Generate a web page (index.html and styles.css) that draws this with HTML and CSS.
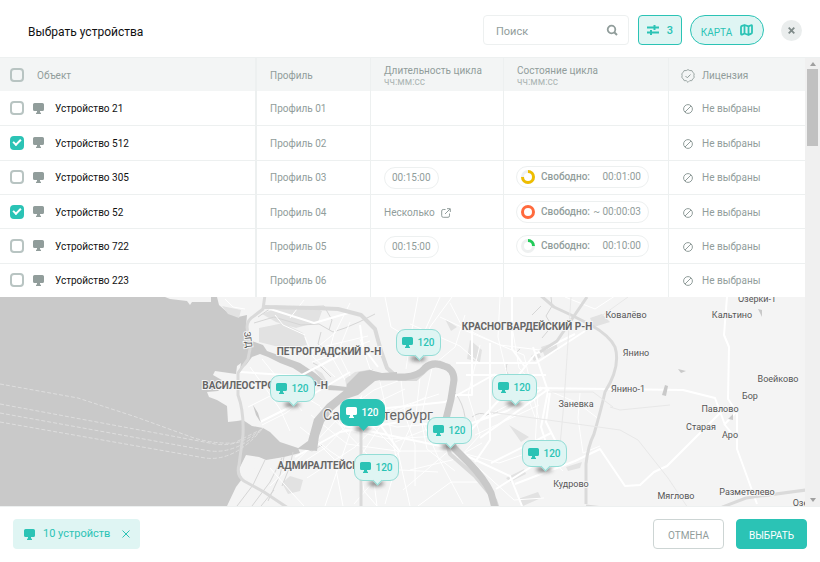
FILE: index.html
```
<!DOCTYPE html>
<html lang="ru">
<head>
  <meta charset="UTF-8" />
  <meta name="viewport" content="width=device-width, initial-scale=1.0"/>
  <title>Выбрать устройства</title>
  <link rel="stylesheet" href="styles.css">
</head>
<body>
<svg class="sprite" aria-hidden="true">
  <symbol id="monitor" viewBox="0 0 11 11"><path d="M1.6 0h7.8Q11 0 11 1.6v4.8Q11 8 9.4 8H7v1.3l1 .6V11H3V9.900l1-.6V8H1.600Q0 8 0 6.400V1.600Q0 0 1.600 0z" fill="currentColor"/></symbol>
  <symbol id="none" viewBox="0 0 10 10"><path d="M5 .6a4.400 4.400 0 1 0 0 8.800a4.400 4.400 0 1 0 0-8.800zM2 8l6-6" fill="none" stroke="currentColor"/></symbol>
</svg>
<div class="dialog">
  <header class="header">
    <h1>Выбрать устройства</h1>
    <label class="search">
      <input type="text" placeholder="Поиск" aria-label="Поиск">
      <svg width="12" height="12" viewBox="0 0 12 12"><circle cx="5.500" cy="5.500" r="3.800" fill="none" stroke="currentColor" stroke-width="1.800"/><path d="M8 8L11 11" stroke="currentColor" stroke-width="2"/></svg>
    </label>
    <button class="tool filter" type="button">
      <svg width="12" height="12" viewBox="0 0 12 12"><path d="M0 3.500h12M0 8.500h12" stroke="currentColor" stroke-width="2"/><path d="M7.500 1v5M4 6v5" stroke="currentColor" stroke-width="2"/></svg>
      <span>3</span>
    </button>
    <button class="tool map-toggle" type="button">
      <span>КАРТА</span>
      <svg width="13" height="12" viewBox="0 0 13 12"><path d="M1 3.200Q1 2.200 2 1.800L4.500 1l4 1.400L11 1.300q1-.3 1 .7v6.500q0 .8-.8 1.100L8.500 11l-4-1.500L2 10.600q-1 .3-1-.8zM4.500 1v8.500M8.500 2.400V11" fill="none" stroke="currentColor" stroke-width="1.800" stroke-linejoin="round"/></svg>
    </button>
    <button class="close" type="button" aria-label="Закрыть">
      <svg width="7" height="7" viewBox="0 0 7 7"><path d="M.7.7l5.600 5.600M6.300.7L.7 6.300" stroke="currentColor" stroke-width="1.800"/></svg>
    </button>
  </header>

  <main class="body">
    <div class="content">
      <table class="devices">
        <colgroup>
          <col><col class="c-profile"><col class="c-time"><col class="c-state"><col class="c-license">
        </colgroup>
        <thead>
          <tr>
            <th><label class="cell head-object"><input type="checkbox" class="check"><span>Объект</span></label></th>
            <th>Профиль</th>
            <th class="two-line">Длительность цикла<small>чч:мм:сс</small></th>
            <th class="two-line">Состояние цикла<small>чч:мм:сс</small></th>
            <th><div class="cell license">
              <svg width="14" height="14" viewBox="0 0 14 14" fill="none" stroke="currentColor"><path d="M7 .6l1.800 1 2-.1.900 1.800 1.500 1.300-.3 2 .3 2-1.500 1.300-.9 1.800-2-.1L7 13.400l-1.800-1.800-2 .1-.9-1.800L.8 8.600l.3-2-.3-2 1.500-1.300.9-1.800 2 .1z" stroke-width=".9" stroke-linejoin="round"/><path d="M4.500 7l1.800 1.800 3.200-3.300"/></svg>
              <span>Лицензия</span></div></th>
          </tr>
        </thead>
        <tbody>
          <tr>
            <td><label class="cell"><input type="checkbox" class="check"><svg class="monitor"><use href="#monitor"/></svg><span>Устройство 21</span></label></td>
            <td>Профиль 01</td>
            <td></td>
            <td></td>
            <td><div class="cell license"><svg class="none"><use href="#none"/></svg><span>Не выбраны</span></div></td>
          </tr>
          <tr>
            <td><label class="cell"><input type="checkbox" class="check" checked><svg class="monitor"><use href="#monitor"/></svg><span>Устройство 512</span></label></td>
            <td>Профиль 02</td>
            <td></td>
            <td></td>
            <td><div class="cell license"><svg class="none"><use href="#none"/></svg><span>Не выбраны</span></div></td>
          </tr>
          <tr>
            <td><label class="cell"><input type="checkbox" class="check"><svg class="monitor"><use href="#monitor"/></svg><span>Устройство 305</span></label></td>
            <td>Профиль 03</td>
            <td><span class="pill">00:15:00</span></td>
            <td class="state-cell"><div class="pill state">
              <svg class="ring" viewBox="0 0 14 14"><circle cx="7" cy="7" r="5.500"/><path class="yellow" d="M7 1.500A5.500 5.500 0 1 1 1.500 7"/></svg>
              <b>Свободно:</b><span>00:01:00</span></div></td>
            <td><div class="cell license"><svg class="none"><use href="#none"/></svg><span>Не выбраны</span></div></td>
          </tr>
          <tr>
            <td><label class="cell"><input type="checkbox" class="check" checked><svg class="monitor"><use href="#monitor"/></svg><span>Устройство 52</span></label></td>
            <td>Профиль 04</td>
            <td><a class="several" href="#">Несколько
              <svg width="10" height="10" viewBox="0 0 10 10" fill="none" stroke="currentColor"><path d="M4.500 1.500H2.200Q.7 1.500.7 3v4.800q0 1.500 1.500 1.500H7q1.500 0 1.500-1.500V5.500M6 .7h3.300V4M9 1L4 6"/></svg></a></td>
            <td class="state-cell"><div class="pill state">
              <svg class="ring" viewBox="0 0 14 14"><circle class="red" cx="7" cy="7" r="5.500"/></svg>
              <b>Свободно:</b><span>~ 00:00:03</span></div></td>
            <td><div class="cell license"><svg class="none"><use href="#none"/></svg><span>Не выбраны</span></div></td>
          </tr>
          <tr>
            <td><label class="cell"><input type="checkbox" class="check"><svg class="monitor"><use href="#monitor"/></svg><span>Устройство 722</span></label></td>
            <td>Профиль 05</td>
            <td><span class="pill">00:15:00</span></td>
            <td class="state-cell"><div class="pill state">
              <svg class="ring" viewBox="0 0 14 14"><circle cx="7" cy="7" r="5.500"/><path class="green" d="M7 1.500A5.500 5.500 0 0 1 12.500 7"/></svg>
              <b>Свободно:</b><span>00:10:00</span></div></td>
            <td><div class="cell license"><svg class="none"><use href="#none"/></svg><span>Не выбраны</span></div></td>
          </tr>
          <tr>
            <td><label class="cell"><input type="checkbox" class="check"><svg class="monitor"><use href="#monitor"/></svg><span>Устройство 223</span></label></td>
            <td>Профиль 06</td>
            <td></td>
            <td></td>
            <td><div class="cell license"><svg class="none"><use href="#none"/></svg><span>Не выбраны</span></div></td>
          </tr>
        </tbody>
      </table>

      <div class="map">
        <svg class="map-art" viewBox="0 0 805 209" preserveAspectRatio="xMinYMin slice">
          <!-- gulf -->
          <path class="water" d="M0 0H217L219 8 226 14 238 20 247 18 246 30 249 43 263 48 267 54 278 58 300 66 315 76 329 88 347 90V94L327 93 310 82 293 71 280 66 268 60 260 57 252 60 246 68 240 73 241 66 237 69 236 77 215 74 213 78 227 86 218 94 207 95 209 100 217 103 227 109 228 125 237 124 243 123 252 129 263 131 270 135 280 145 298 151 300 156 284 160 266 163 259 160 246 158 239 172 242 182 236 190 227 209H0z"/>
          <path class="land" d="M165 0H211V5H192L190 8 187 4 170 2zM246 161l11 6-8 17-9-6z"/>
          <path class="park" d="M222 9l19 4-2 8-11-4zM259 31l15-3 9-2 20 10 4 12-20 4-28-7zM262 17l20-8 28 0 12 5-4 11-22 6-20-6zM345 82l10-7 18-3 3 8-22 12-7 0zM312 70l10 6 6 10-8-6zM282 186l8-7 13 4-3 11-12 3zM470 43l12 10-2 12-13-3zM509 128l20 12-8 5zM506 181l18-9 2 5-16 8zM518 202l20-7 3 6-18 8zM590 21l12-4 8 8-16 5zM566 170l16-5-2 6-12 3zM445 22l12 8-6 4zM531 59l7-5 3 6-7 4zM541 50l15-5 2 8-13 7z"/>
          <g class="canal">
            <path d="M237 209l16-21 12-25M252 209l18-24 12-24M261 209l13-16M284 160l-4 18-12 26M302 150l10 4 10-6M293 155l-3 14-8 20"/>
            <path d="M254 26l20-6 27 8 18-1 14 8 12-4 14-6 16-8M321 35l-3 12 9 7 10 0M258 20l16-11 26 1 24-1M324 9l8 14-3 10M313 66l8 4 10 10"/>
            <path d="M551 0l1 9-6 10 6 10-10 12M541 9l-9 9M508 65q-4 7 0 12M520 52q-6 4-2 9M472 120q8-6 14-2l12-3M455 96q8 10 10 24"/>
          </g>
          <g class="street thin">
            <path d="M225 2l8 8 12 2M275 18l8 10 22 10M250 70l16 22 14 20 10 22M262 62l18 22 22 30M242 92l22-5 26 4 30 18M248 110l28-14 30-18M262 128l24-12 26-20M305 40l8 20 22 20M335 33l-6 22 16 28M350 25l-12 30 12 24M312 65l26-9 32-12M318 51l50-12M360 42l10 30 10 5M350 6l-15 30-30 24M385 0l6 30 22 13M418 0l-6 32-6 40M440 0l-18 40-9 24M452 0l-22 30-10 36M465 18l-10 32-30 25M290 21l14-18M270 189l40-38 34-36 30-22 24-9M297 169l28-18 36-38 44-21M307 181l48-31 36-37 48-16M325 209l22-64 15-47M343 209l-9-47-26-26M377 209l-6-48-29-30-9-18M410 209l-12-54-26-26-8-24M300 130l30 24 15 10 37 8 56 3M311 118l36 29 50 7 50 0M320 110l24 22 46 10 48-3M335 102l22 18 40 10 48-4M380 85l8 35 9 45-12 42M401 83l4 35 10 30 0 41M420 80l-4 38-17 37-45 52M432 71l-11 50 17 39 25 47M395 145l50-20M360 160l26-40 40-20M403 193l48-41M418 209l33-24 35 0M410 173l42-10 30-17M455 174l-28-22-6-30M270 171l22 25 12 13M360 170l4 24 13 15"/>
            <path d="M440 20l60 28 40 5M480 48l-12 50 12 40-20 22M410 27l50 22 20 18M450 6l14 27 60 25 15 65M475 138l64-30M459 155l40 11 60-21M472 165l42 38 30-2M480 123l47-25 8 22M511 23l8 48 21 22M500 0l-2 40 10 42M565 0l30 12 26-17M540 90l38 16 22 17M538 97l-3 52 28 25M580 96l-2 25 5 35 17-7"/>
          </g>
          <g class="street">
            <path d="M264 10l50 16 38-11M240 75l60 4 38-20M260 125l40-20 50-30M378 70l-15-20-3-22M295 160l45-25 60-10M360 100l40 55M350 115l95-10 50-28M420 127l52-1 35-12 35-22M340 128l110 23 60 28 12 30M455 150l45-48 35-45 40-20M456 66h80L585 34M466 78h80M472 23v75h-24M490 46v97l-15 22M512 0v52l13 18M533 50l15 44-7 36 9 28-54 34M533 91l150 2 32 8 10 27 8 10M550 95l-4 30 18 36M491 166l60-30M515 187l60-23 25-12 25 37 15-1 14-13 13-6 60-60M724 128l13-14V152l20 55M727 0l-3 38 5 12-1 52 8 12M480 141l70-50"/>
          </g>
          <path class="embankment" d="M264 10l50 1 24 1 23 6 14 14 6 22 6 17 12 11 17 0 12-11 10-4 11 2 4 11-3 24-7 28 7 25 25 22 20 24 4 12"/>
          <path class="water" d="M347 87l12-12 11-2 12 3 15-1v5l-22 4-17 14-12 4-13 11-9 12-5 14-2 15-20-2 11-8 6-22 13-15 19-15z"/>
          <path class="neva" d="M380 80q10 0 25 0 14-1 20-9 8-7 19-2 10 3 10 14l-3 19-6 24q2 12 9 25l14 14q16 16 23 31l4 15"/>
          <g class="highway">
            <path d="M265-2l-2 14-9 7q-7 4-7 11l3 22-2 10-10 14v22q6 16 5 40l-4 30q-3 10 5 16l20 11 24 16M361 104v105M540-2l14 12 15 7 22 11q19 11 24 22 6 19-10 45-4 18-11 42-6 12-8 30v40M586 209l26 3M720 211l26-10 60-8M540 55l17-11 30-44"/>
          </g>
          <path class="minor" d="M610 110l10 3 50-5M490 115l130 18 18 10 30 38 20 30M571 0l-7 105-6 65M600 20l28-20M613 110l-20-15-45 0"/>
          <path class="mark" d="M665 88l3 1-2 10-4-1zM758 12l4 1v7zM728 122l5-5v6zM253 108l5 8 3 10-5-8zM722 44l4 4M678 72l3 4 5-2"/>
          <g class="ferry"><path d="M0 87l78 14 58 19 58 21q20 6 40 5l30-15M0 107l215 40q24 4 48-16M0 116l210 38q28 3 53-23M0 125l205 36q30 4 58-30"/></g>
          <g class="town">
            <text x="626" y="21">Ковалёво</text><text x="636" y="59">Янино</text><text x="628" y="95">Янино-1</text>
            <text x="576" y="110">Заневка</text><text x="571" y="190">Кудрово</text><text x="757" y="5">Озерки-1</text>
            <text x="732" y="21">Кальтино</text><text x="778" y="85">Воейково</text><text x="750" y="102">Бор</text>
            <text x="720" y="115">Павлово</text><text x="701" y="133">Старая</text><text x="730" y="141">Аро</text>
            <text x="676" y="202">Мяглово</text><text x="747" y="198">Разметелево</text><text x="808" y="209">Озерки</text>
            <text x="0" y="0" transform="translate(245 43) rotate(83)">ЗГД</text>
          </g>
          <g class="district">
            <text x="527" y="33">КРАСНОГВАРДЕЙСКИЙ Р-Н</text><text x="329" y="58">ПЕТРОГРАДСКИЙ Р-Н</text>
            <text x="265" y="92">ВАСИЛЕОСТРОВСКИЙ Р-Н</text><text x="335" y="172">АДМИРАЛТЕЙСКИЙ Р-Н</text>
          </g>
          <text class="city" x="378" y="123">Санкт-Петербург</text>
        </svg>
        <button class="pin p1" type="button"><svg class="monitor"><use href="#monitor"/></svg>120</button>
        <button class="pin p2" type="button"><svg class="monitor"><use href="#monitor"/></svg>120</button>
        <button class="pin p3 active" type="button"><svg class="monitor"><use href="#monitor"/></svg>120</button>
        <button class="pin p4" type="button"><svg class="monitor"><use href="#monitor"/></svg>120</button>
        <button class="pin p5" type="button"><svg class="monitor"><use href="#monitor"/></svg>120</button>
        <button class="pin p6" type="button"><svg class="monitor"><use href="#monitor"/></svg>120</button>
        <button class="pin p7" type="button"><svg class="monitor"><use href="#monitor"/></svg>120</button>
      </div>
    </div>
    <div class="scrollbar" aria-hidden="true">
      <i class="arrow up"></i>
      <i class="thumb"></i>
      <i class="arrow down"></i>
    </div>
  </main>

  <footer class="footer">
    <div class="chip">
      <svg class="monitor"><use href="#monitor"/></svg>
      <span>10 устройств</span>
      <button type="button" aria-label="Сбросить"><svg width="8" height="8" viewBox="0 0 8 8"><path d="M.5.5l7 7M7.500.5l-7 7" stroke="currentColor"/></svg></button>
    </div>
    <button class="btn" type="button">ОТМЕНА</button>
    <button class="btn primary" type="button">ВЫБРАТЬ</button>
  </footer>
</div>
</body>
</html>
```
FILE: styles.css
```
:root {
  --accent: #2bc3b5;
  --accent-light: #dff5f3;
  --gray: #919d9b;
  --line: #edf0f0;
  --head: #f3f5f5;
}

* {
  box-sizing: border-box;
}

body {
  margin: 0;
  font-family: Roboto, sans-serif;
  font-size: 11px;
  line-height: 14px;
  color: var(--gray);
  background: #fff;
}

button, input {
  font-family: inherit;
  font-size: inherit;
  color: inherit;
}

button {
  cursor: pointer;
}

svg {
  display: block;
  flex: none;
}

.sprite {
  position: absolute;
  width: 0;
  height: 0;
}

.dialog {
  display: flex;
  flex-direction: column;
  min-height: 100vh;
}

/* header */
.header {
  display: flex;
  align-items: center;
  padding: 15px 18px 12px 28px;
  border-bottom: 1px solid var(--line);
}

.header h1 {
  flex: 1;
  margin: 0;
  padding-top: 3px;
  font-size: 12px;
  font-weight: 400;
  color: #111;
}

.search {
  display: flex;
  align-items: center;
  width: 146px;
  height: 30px;
  padding: 0 10px 0 12px;
  border: 1px solid var(--line);
  border-radius: 4px;
}

.search input {
  flex: 1;
  min-width: 0;
  padding: 2px 0 0;
  border: none;
  outline: none;
  background: none;
}

.search input::placeholder {
  color: var(--gray);
}

.tool {
  display: flex;
  align-items: center;
  justify-content: center;
  gap: 8px;
  height: 30px;
  padding: 0;
  color: var(--accent);
  background: var(--accent-light);
  border: 1px solid var(--accent);
}

.filter {
  width: 44px;
  margin-left: 9px;
  border-radius: 4px;
  font-weight: 500;
}

.filter span {
  padding-top: 1px;
}

.map-toggle {
  width: 74px;
  margin-left: 8px;
  border-radius: 15px;
  font-size: 10px;
}

.map-toggle span {
  padding-top: 4px;
}

.close {
  display: flex;
  align-items: center;
  justify-content: center;
  width: 21px;
  height: 21px;
  margin-left: 17px;
  padding: 0;
  border: none;
  border-radius: 50%;
  color: #7f8a89;
  background: #eaeded;
}

.body {
  flex: 1;
  display: flex;
}

.content {
  flex: 1;
  min-width: 0;
  display: flex;
  flex-direction: column;
}

/* table */
.devices {
  width: 100%;
  height: 239px;
  table-layout: fixed;
  border-spacing: 0;
  font-size: 10px;
}

.c-profile { width: 114px; }
.c-time { width: 133px; }
.c-state { width: 165px; }
.c-license { width: 136px; }

th, td {
  height: 34px;
  padding: 2px 0 0 13px;
  font-weight: 400;
  text-align: left;
  vertical-align: middle;
  white-space: nowrap;
  border-right: 1px solid var(--line);
}

th:first-child, td:first-child {
  padding: 0 0 0 10px;
  border-right-width: 2px;
}

th:last-child, td:last-child {
  padding-left: 12px;
  border-right: none;
}

th {
  height: 33px;
  background: var(--head);
}

tbody tr + tr td {
  border-top: 1px solid var(--line);
}

th small {
  display: block;
  font-size: 10px;
  line-height: 10px;
  color: #aeb7b6;
}

.two-line {
  line-height: 13px;
}

.cell {
  display: flex;
  align-items: center;
}

.check {
  appearance: none;
  display: grid;
  place-items: center;
  width: 14px;
  height: 14px;
  margin: 0 9px 0 0;
  border: 2px solid #b8c4c2;
  border-radius: 4px;
  background: #fff;
}

.check:checked {
  border-color: var(--accent);
  background: var(--accent);
}

.check:checked::after {
  content: "";
  width: 6px;
  height: 3px;
  margin-bottom: 2px;
  border: solid #fff;
  border-width: 0 0 2px 2px;
  transform: rotate(-45deg);
}

.head-object .check {
  margin-right: 13px;
  background: none;
}

.head-object span {
  padding-top: 2px;
}

.monitor {
  width: 11px;
  height: 11px;
}

td .cell .monitor {
  margin-right: 11px;
}

td label span {
  padding-top: 2px;
  color: #111;
}

.license svg {
  margin-right: 7px;
}

.license .none {
  width: 10px;
  height: 10px;
  margin: 0 9px 0 2px;
}

.pill {
  display: inline-block;
  padding: 3px 7px;
  border: 1px solid var(--line);
  border-radius: 11px;
}

td .pill, .state span {
  font-size: 10px;
}

td.state-cell {
  padding: 0 0 0 12px;
}

.state {
  display: flex;
  align-items: center;
  width: 133px;
  height: 22px;
  padding: 0 7px 0 4px;
}

.state b {
  margin-left: 6px;
  font-weight: 500;
}

.state span {
  flex: 1;
  text-align: right;
}

.ring {
  width: 14px;
  height: 14px;
  fill: none;
  stroke: #eef0f0;
  stroke-width: 3;
}

.ring .yellow { stroke: #eebd00; }
.ring .red { stroke: #ff6a3d; }
.ring .green { stroke: #22cb59; }

.several {
  display: flex;
  align-items: center;
  gap: 6px;
  color: inherit;
  text-decoration: none;
}

/* map */
.map {
  position: relative;
  flex: 1;
  min-height: 209px;
  overflow: hidden;
  isolation: isolate;
  background: #f4f4f4;
}

.map-art {
  position: absolute;
  z-index: -2;
  width: 100%;
  height: 100%;
}

.water { fill: #c9c9c9; }
.land { fill: #f4f4f4; }
.park { fill: #e2e2e2; }
.mark { fill: #c9c9c9; }

.canal, .street, .embankment, .neva, .highway, .minor, .ferry {
  fill: none;
  stroke-linejoin: round;
}

.canal { stroke: #d6d6d6; stroke-width: 1; }
.street { stroke: #fff; stroke-width: 2; }
.street.thin { stroke-width: 1; }
.embankment { stroke: #d9d9d9; stroke-width: 4; }
.neva { stroke: #c9c9c9; stroke-width: 7; }
.highway { stroke: #dadada; stroke-width: 3; }
.minor { stroke: #e8e8e8; }
.ferry { stroke: #dedede; stroke-dasharray: 4 2; }

.map-art text {
  text-anchor: middle;
  fill: #666;
  stroke: #f6f6f6;
  stroke-width: 2px;
  paint-order: stroke;
}

.map-art .town text { font-size: 9px; fill: #555; }
.district { font-size: 10px; font-weight: 700; }
.map-art .city { font-size: 14px; }

.pin {
  position: absolute;
  display: flex;
  align-items: center;
  justify-content: center;
  gap: 4px;
  width: 45px;
  height: 27px;
  padding: 0;
  font-size: 10px;
  font-weight: 500;
  color: var(--accent);
  background: var(--accent-light);
  border: 1px solid #93ddd6;
  border-radius: 9px;
}

.pin::before {
  content: "";
  position: absolute;
  bottom: -6px;
  left: 13px;
  width: 16px;
  height: 5px;
  border-radius: 50%;
  background: #777;
  filter: blur(2px);
  z-index: -1;
}

.pin::after {
  content: "";
  position: absolute;
  bottom: -4px;
  left: 19px;
  width: 6px;
  height: 6px;
  background: inherit;
  border: solid #93ddd6;
  border-width: 0 1px 1px 0;
  transform: rotate(45deg);
}

.pin.active {
  color: #fff;
  background: var(--accent);
  border-color: var(--accent);
}

.pin.active::after {
  border-color: var(--accent);
}

.p1 { left: 396px; top: 32px; }
.p2 { left: 270px; top: 78px; }
.p3 { left: 340px; top: 102px; }
.p4 { left: 427px; top: 120px; }
.p5 { left: 354px; top: 157px; }
.p6 { left: 492px; top: 77px; }
.p7 { left: 522px; top: 143px; }

/* scrollbar */
.scrollbar {
  display: flex;
  flex-direction: column;
  align-items: center;
  width: 15px;
  padding: 4px 0;
  background: #f0f0f0;
}

.arrow {
  border: 3px solid transparent;
}

.arrow.up {
  border-top: none;
  border-bottom: 4px solid #a0a0a0;
}

.arrow.down {
  margin-top: auto;
  border-bottom: none;
  border-top: 4px solid #a0a0a0;
}

.thumb {
  width: 11px;
  height: 77px;
  margin-top: 3px;
  background: #c1c1c1;
}

/* footer */
.footer {
  display: flex;
  align-items: center;
  gap: 12px;
  padding: 12px 13px 13px;
  border-top: 1px solid var(--line);
}

.chip {
  display: flex;
  align-items: center;
  height: 30px;
  margin-right: auto;
  padding: 0 10px 0 11px;
  font-size: 11px;
  color: var(--accent);
  background: var(--accent-light);
  border-radius: 4px;
}

.chip span {
  margin: 0 12px 0 8px;
}

.chip button {
  padding: 0;
  border: none;
  background: none;
}

.btn {
  width: 71px;
  height: 30px;
  padding: 2px 0 0;
  font-size: 10px;
  background: #fff;
  border: 1px solid #cdd5d4;
  border-radius: 4px;
}

.btn.primary {
  color: #fff;
  background: var(--accent);
  border-color: var(--accent);
}
```
